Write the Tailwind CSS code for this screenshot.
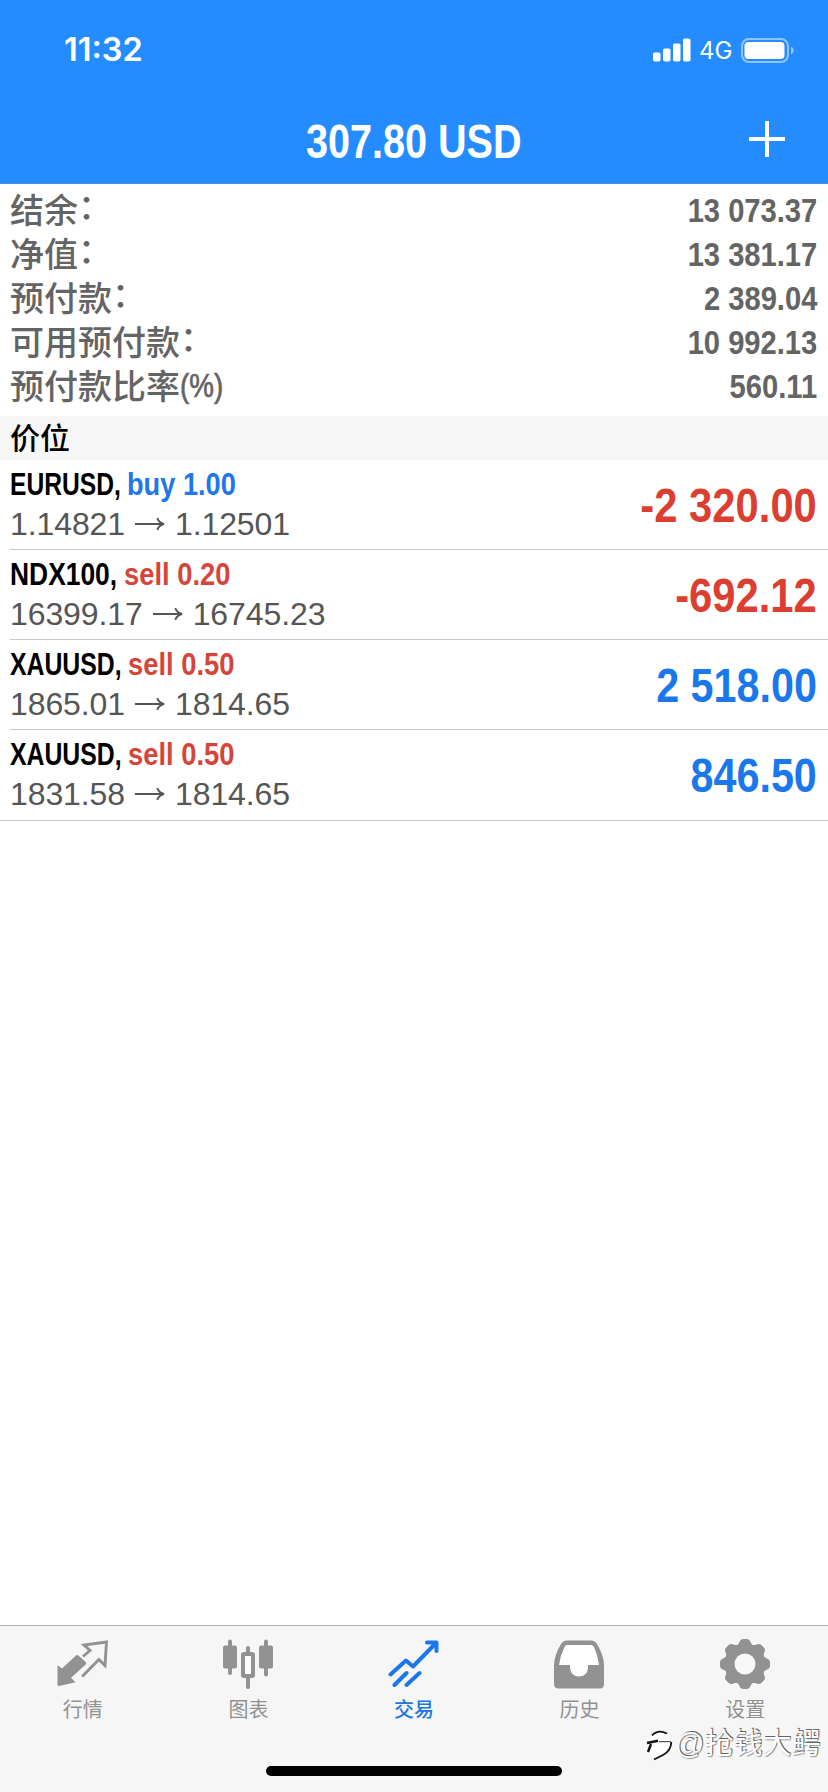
<!DOCTYPE html>
<html lang="zh-CN">
<head>
<meta charset="utf-8">
<title>交易</title>
<script src="https://cdn.jsdelivr.net/npm/@tailwindcss/browser@4"></script>
</head>
<body class="relative flex h-[1792px] w-[828px] flex-col overflow-hidden bg-white font-['Liberation_Sans','Noto_Sans_CJK_SC',sans-serif]">
<header class="flex h-[184px] shrink-0 flex-col border-b border-[#4a90e0] bg-[#258cff] text-white">
  <div class="flex h-[101px] items-center justify-between pl-[64px] pr-[33px]">
    <span class="font-['Inter',sans-serif] text-[32.5px] font-semibold">11:32</span>
    <div class="flex items-center pb-px">
      <svg class="h-[24px] w-[38px]" viewBox="0 0 38 24" fill="#fff"><rect x="0" y="14.500" width="7.500" height="9" rx="1.800"/><rect x="10" y="10.500" width="7.500" height="13" rx="1.800"/><rect x="20" y="5.500" width="7.500" height="18" rx="1.800"/><rect x="30" y="0.500" width="7.500" height="23" rx="1.800"/></svg>
      <span class="ml-[8px] mt-[2px] w-[34px] whitespace-nowrap font-['Inter',sans-serif] text-[24px] leading-6">4G</span>
      <svg class="ml-[8px] h-[25px] w-[54px]" viewBox="0 0 54 25"><rect x="1" y="1" width="46" height="23" rx="7" fill="none" stroke="#92c5ff" stroke-width="2"/><rect x="3.500" y="4" width="40" height="17" rx="4" fill="#fff"/><path d="M50 8.500c3.600 1.500 3.600 6.500 0 8z" fill="#92c5ff"/></svg>
    </div>
  </div>
  <div class="grid h-[82px] grid-cols-[1fr_auto_1fr] items-center px-[43px]">
    <h1 class="col-start-2 scale-x-[.825] text-[48px] font-bold">307.80 USD</h1>
    <svg class="mb-[6px] h-[36px] w-[36px] justify-self-end" viewBox="0 0 36 36" stroke="#fff" stroke-width="4"><path d="M18 0v36M0 18h36"/></svg>
  </div>
</header>
<section class="h-[232px] shrink-0 pl-[10px] pr-[11px] pt-1 text-[34px] font-medium text-[#646464]">
  <div class="flex h-11 items-center justify-between"><span class="pt-[2px]">结余<span class="inline-block -translate-y-1">：</span></span><span class="origin-right scale-x-[.857] font-bold">13 073.37</span></div>
  <div class="flex h-11 items-center justify-between"><span class="pt-[2px]">净值<span class="inline-block -translate-y-1">：</span></span><span class="origin-right scale-x-[.857] font-bold">13 381.17</span></div>
  <div class="flex h-11 items-center justify-between"><span class="pt-[2px]">预付款<span class="inline-block -translate-y-1">：</span></span><span class="origin-right scale-x-[.857] font-bold">2 389.04</span></div>
  <div class="flex h-11 items-center justify-between"><span class="pt-[2px]">可用预付款<span class="inline-block -translate-y-1">：</span></span><span class="origin-right scale-x-[.857] font-bold">10 992.13</span></div>
  <div class="flex h-11 items-center justify-between"><span class="pt-[2px]">预付款比率<span class="inline-block origin-left -translate-y-[2px] scale-x-[.84] text-[33px] [-webkit-text-stroke:0.7px_#646464]">(%)</span></span><span class="origin-right scale-x-[.857] font-bold">560.11</span></div>
</section>
<h2 class="flex h-11 shrink-0 items-center bg-[#f6f6f6] pl-[10px] text-[30px] font-medium text-black">价位</h2>
<main class="flex-1">
  <div class="ml-[10px] flex h-[90px] items-center justify-between border-b border-[#c8c8c8] pr-[11px]">
    <div class="pb-px"><p class="flex whitespace-nowrap text-[32px] font-bold leading-10"><span class="w-[116.500px]"><span class="inline-block origin-left scale-x-[.77]">EURUSD,</span></span><span class="origin-left scale-x-[.85] text-[#2177e8]">buy 1.00</span></p>
    <p class="flex items-center text-[32px] leading-10 tracking-[-0.1px] text-[#555]">1.14821<svg class="ml-[9px] mr-[10px] h-[14px] w-[31px]" viewBox="0 0 32 14" fill="none" stroke="#555" stroke-width="2"><path d="M1 7h29M24 1q2 5 7 6q-5 1-7 6"/></svg>1.12501</p></div>
    <span class="origin-right scale-x-[.87] pt-[3px] text-[48px] font-bold text-[#db3f32]">-2 320.00</span>
  </div>
  <div class="ml-[10px] flex h-[90px] items-center justify-between border-b border-[#c8c8c8] pr-[11px]">
    <div class="pb-px"><p class="flex whitespace-nowrap text-[32px] font-bold leading-10"><span class="w-[114px]"><span class="inline-block origin-left scale-x-[.825]">NDX100,</span></span><span class="origin-left scale-x-[.855] text-[#d6453a]">sell 0.20</span></p>
    <p class="flex items-center text-[32px] leading-10 tracking-[-0.1px] text-[#555]">16399.17<svg class="ml-[9px] mr-[10px] h-[14px] w-[31px]" viewBox="0 0 32 14" fill="none" stroke="#555" stroke-width="2"><path d="M1 7h29M24 1q2 5 7 6q-5 1-7 6"/></svg>16745.23</p></div>
    <span class="origin-right scale-x-[.87] pt-[3px] text-[48px] font-bold text-[#db3f32]">-692.12</span>
  </div>
  <div class="ml-[10px] flex h-[90px] items-center justify-between border-b border-[#c8c8c8] pr-[11px]">
    <div class="pb-px"><p class="flex whitespace-nowrap text-[32px] font-bold leading-10"><span class="w-[118px]"><span class="inline-block origin-left scale-x-[.775]">XAUUSD,</span></span><span class="origin-left scale-x-[.855] text-[#d6453a]">sell 0.50</span></p>
    <p class="flex items-center text-[32px] leading-10 tracking-[-0.1px] text-[#555]">1865.01<svg class="ml-[9px] mr-[10px] h-[14px] w-[31px]" viewBox="0 0 32 14" fill="none" stroke="#555" stroke-width="2"><path d="M1 7h29M24 1q2 5 7 6q-5 1-7 6"/></svg>1814.65</p></div>
    <span class="origin-right scale-x-[.86] pt-[3px] text-[48px] font-bold text-[#1b78ea]">2 518.00</span>
  </div>
  <div class="flex h-[91px] items-center justify-between border-b border-[#c8c8c8] pl-[10px] pr-[11px]">
    <div class="pb-[2px]"><p class="flex whitespace-nowrap text-[32px] font-bold leading-10"><span class="w-[118px]"><span class="inline-block origin-left scale-x-[.775]">XAUUSD,</span></span><span class="origin-left scale-x-[.855] text-[#d6453a]">sell 0.50</span></p>
    <p class="flex items-center text-[32px] leading-10 tracking-[-0.1px] text-[#555]">1831.58<svg class="ml-[9px] mr-[10px] h-[14px] w-[31px]" viewBox="0 0 32 14" fill="none" stroke="#555" stroke-width="2"><path d="M1 7h29M24 1q2 5 7 6q-5 1-7 6"/></svg>1814.65</p></div>
    <span class="origin-right scale-x-[.86] pt-[2px] text-[48px] font-bold text-[#1b78ea]">846.50</span>
  </div>
</main>
<footer class="flex h-[167px] shrink-0 flex-col items-center justify-between border-t border-[#b2b2b2] bg-[#f6f6f6] pb-4">
  <nav class="grid w-full grid-cols-5 pt-3 text-[20px] leading-[30px] text-[#929292]">
    <a class="flex flex-col items-center gap-[5px]"><svg class="h-[52px] w-[52px]" viewBox="0 0 52 52"><path d="M.5 27.300L5 30.500 19 17.500q1.200-1 2.400 0L28.700 24q1 1.300 0 2.400L14 39.700l4.500 4.600L2 48q-1.500 0-1.500-1.500z" fill="#929292"/><path d="M26 18.500L33 12.500 27 7 49.500 4 48 27.500 41.900 21.500 25.200 38.500" fill="none" stroke="#929292" stroke-width="2.900"/></svg>行情</a>
    <a class="flex flex-col items-center gap-[5px]"><svg class="h-[52px] w-[52px]" viewBox="0 0 52 52"><g fill="#929292"><rect x="1" y="7.500" width="14" height="23" rx="2"/><rect x="6" y="1.500" width="4" height="35.500" rx="2"/><rect x="37" y="7.500" width="14" height="23" rx="2"/><rect x="42" y="1.500" width="4" height="37" rx="2"/><rect x="24" y="8" width="4" height="9" rx="2"/><rect x="24" y="38" width="4" height="13" rx="2"/></g><rect x="21" y="16" width="10" height="22" rx="1" fill="#fff" stroke="#929292" stroke-width="4"/></svg>图表</a>
    <a class="flex flex-col items-center gap-[5px] font-medium text-[#2177e0]"><svg class="h-[52px] w-[52px]" viewBox="0 0 52 52" fill="none" stroke="#1b78ea" stroke-width="4" stroke-linecap="round" stroke-linejoin="round"><path d="M2.500 36.500l15.500-14 7 6L48 5M39 4.500h9.500V13M6.500 47l12-12M18.500 47l13-12"/></svg>交易</a>
    <a class="flex flex-col items-center gap-[5px]"><svg class="h-[52px] w-[52px]" viewBox="0 0 52 52"><path d="M7 6Q9 2.500 13 2.500H37Q41 2.500 43 6Q50 18 50 27V46Q50 50.500 46 50.500H5Q0 50.500 0 46V27Q0 18 7 6Z" fill="#929292"/><path d="M10.500 9Q11.200 7 13 7H37Q39 7 40 9Q44 18 45 27H34V30Q33 38.500 25 38.500Q17 38.500 16 30V27H5Q6.500 17 10.500 9Z" fill="#fff"/></svg>历史</a>
    <a class="flex flex-col items-center gap-[5px]"><svg class="h-[52px] w-[52px]" viewBox="0 0 52 52"><g fill="#929292"><circle cx="26" cy="26" r="20.500"/><path id="t" d="M16.500 8.500Q19.500 7 20.500 4 21.500 1 24.500 1h3Q30.500 1 31.500 4 32.500 7 35.500 8.500z"/><use href="#t" transform="rotate(45 26 26)"/><use href="#t" transform="rotate(90 26 26)"/><use href="#t" transform="rotate(135 26 26)"/><use href="#t" transform="rotate(180 26 26)"/><use href="#t" transform="rotate(225 26 26)"/><use href="#t" transform="rotate(270 26 26)"/><use href="#t" transform="rotate(315 26 26)"/></g><circle cx="26" cy="26" r="10.500" fill="#f8f8f8"/></svg>设置</a>
  </nav>
  <div class="h-[10px] w-[296px] rounded-full bg-black"></div>
</footer>
<div class="absolute left-[643px] top-[1722px] flex items-center whitespace-nowrap text-[29px] leading-[44px] text-white [text-shadow:1px_-1px_0px_#666,1px_1px_1px_#999]">
  <svg class="h-[36px] w-[32px]" viewBox="0 0 32 36"><path d="M8 10Q11 5 17 5Q25 5 27 13Q29 23 20 28L11 32L6 28L7 15Z" fill="#fff"/><path d="M9 9.500Q15 3 24 7.500M28.300 16Q28 25 20 29L11 33.500" fill="none" stroke="#111" stroke-width="1.800"/><path d="M4 17L15 14.800M8 18L5 26" fill="none" stroke="#111" stroke-width="2.400"/><path d="M16 15.700H28" stroke="#333"/></svg><span>@抢钱大鳄</span>
</div>
</body>
</html>
